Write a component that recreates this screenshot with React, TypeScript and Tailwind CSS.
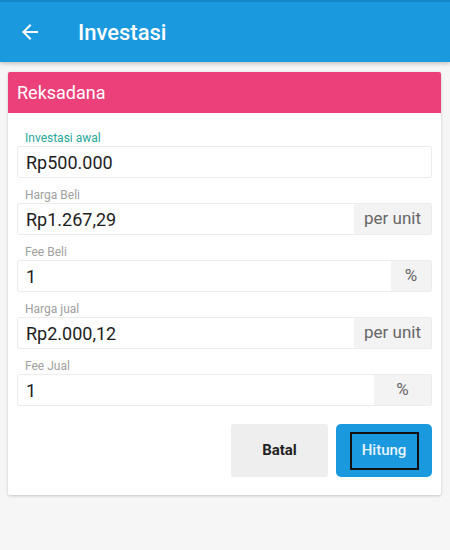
import React from 'react';

const Field = ({
  label,
  value,
  addon,
  addonWidth,
  active,
}: {
  label: string;
  value: string;
  addon?: string;
  addonWidth?: string;
  active?: boolean;
}) => (
  <div className="flex flex-col">
    <div className={`h-4 pl-2 text-[12px] leading-4 ${active ? 'text-[#26a69a]' : 'text-[#a0a0a0]'}`}>
      {label}
    </div>
    <div className="flex h-8 rounded-[2px] border border-[#ececec] bg-white">
      <div className="flex flex-1 items-center pl-2 text-[18px] text-[#1d1d1d]">{value}</div>
      {addon && (
        <div className={`flex items-center justify-center bg-[#f3f3f3] text-[17px] text-[#666666] ${addonWidth}`}>
          {addon}
        </div>
      )}
    </div>
  </div>
);

export default function App() {
  return (
    <div className="min-h-[550px] w-[450px] bg-[#f6f6f6]" style={{ fontFamily: 'Roboto, "Noto Sans", sans-serif' }}>
      <div className="flex h-[62px] items-center border-t-2 border-[#1586c6] bg-[#1a99df] shadow-[0_2px_4px_rgba(0,0,0,0.2)]">
        <svg className="ml-[18px] h-6 w-6" viewBox="0 0 24 24" fill="white">
          <path d="M20 11H7.83l5.59-5.59L12 4l-8 8 8 8 1.41-1.41L7.83 13H20v-2z" />
        </svg>
        <div className="ml-9 text-[22px] font-medium text-white">Investasi</div>
      </div>

      <div className="mx-2 mt-[10px] w-[433px] overflow-hidden rounded-[2px] bg-white shadow-[0_1px_3px_rgba(0,0,0,0.2)]">
        <div className="flex h-[41px] items-center bg-[#ec407a] pl-[9px] text-[18px] text-white">Reksadana</div>
        <div className="flex flex-col gap-[9px] px-[9px] pt-[17px]">
          <Field label="Investasi awal" value="Rp500.000" active />
          <Field label="Harga Beli" value="Rp1.267,29" addon="per unit" addonWidth="w-[77px]" />
          <Field label="Fee Beli" value="1" addon="%" addonWidth="w-[40px]" />
          <Field label="Harga jual" value="Rp2.000,12" addon="per unit" addonWidth="w-[77px]" />
          <Field label="Fee Jual" value="1" addon="%" addonWidth="w-[57px]" />
        </div>
        <div className="flex justify-end gap-2 px-[9px] pb-[18px] pt-[18px]">
          <button className="h-[53px] w-[97px] rounded-[3px] bg-[#eeeeee] text-[15px] font-bold text-[#222222]">
            Batal
          </button>
          <button className="flex h-[53px] w-[96px] items-center justify-center rounded-[5px] bg-[#1a99df]">
            <span className="flex h-[38px] w-[69px] items-center justify-center border-2 border-[#111111] text-[15px] font-medium text-[#e8f4fc]">
              Hitung
            </span>
          </button>
        </div>
      </div>
    </div>
  );
}
